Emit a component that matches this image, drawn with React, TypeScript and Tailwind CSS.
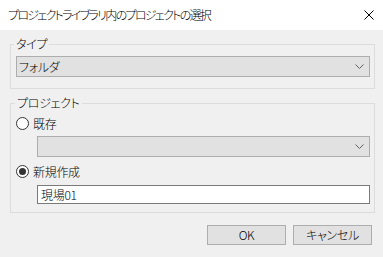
const font = { fontFamily: '"Noto Sans CJK JP", "Noto Sans", sans-serif' };

function Chevron() {
  return (
    <svg width="9" height="5" viewBox="0 0 9 5" className="mr-[5px]">
      <path d="M0.5 0.5 L4.5 4.5 L8.5 0.5" fill="none" stroke="#606060" strokeWidth="1" />
    </svg>
  );
}

function Combo({ value, className }: { value?: string; className: string }) {
  return (
    <div
      className={`flex h-[21px] items-center justify-between border border-[#adadad] bg-[#e1e1e1] pl-[2px] text-[12px] leading-[14px] text-black ${className}`}
    >
      <span>{value}</span>
      <Chevron />
    </div>
  );
}

function Radio({ checked, label }: { checked?: boolean; label: string }) {
  return (
    <div className="ml-[5px] flex h-[13px] items-center gap-[4px]">
      <div className="flex h-[13px] w-[13px] items-center justify-center rounded-full border border-[#333333] bg-white">
        {checked && <div className="h-[7px] w-[7px] rounded-full bg-[#333333]" />}
      </div>
      <span className="text-[12px] leading-[14px] text-black">{label}</span>
    </div>
  );
}

export default function App() {
  return (
    <div
      className="flex h-[257px] w-[383px] flex-col bg-[#f0f0f0] font-light tracking-[-0.3px] [font-feature-settings:'palt']"
      style={font}
    >
      <div className="flex h-[30px] items-center justify-between bg-white pl-[8px] pr-[9px]">
        <span className="text-[12px] leading-[14px] tracking-[-1.7px] text-black">
          プロジェクトライブラリ内のプロジェクトの選択
        </span>
        <svg width="10" height="10" viewBox="0 0 10 10">
          <path d="M0.5 0.5 L9.5 9.5 M9.5 0.5 L0.5 9.5" stroke="#000" strokeWidth="1" />
        </svg>
      </div>

      <div className="flex flex-col pl-[10px]">
        <fieldset className="mt-[7px] w-[365px] border border-[#dcdcdc] pb-[11px]">
          <legend className="ml-[3px] px-[2px] text-[12px] leading-[14px] text-black">タイプ</legend>
          <Combo value="フォルダ" className="ml-[5px] mt-[5px] w-[354px]" />
        </fieldset>

        <fieldset className="mt-[7px] w-[365px] border border-[#dcdcdc] pb-[8px]">
          <legend className="ml-[4px] px-[2px] text-[12px] leading-[14px] text-black">プロジェクト</legend>
          <div className="mt-[7px]">
            <Radio label="既存" />
          </div>
          <Combo className="ml-[26px] mt-[6px] w-[333px]" />
          <div className="mt-[8px]">
            <Radio checked label="新規作成" />
          </div>
          <div className="ml-[26px] mt-[7px] flex h-[19px] w-[333px] items-center border border-[#7a7a7a] bg-white pl-[3px] text-[12px] leading-[14px] text-black">
            現場01
          </div>
        </fieldset>
      </div>

      <div className="mt-[12px] flex justify-end gap-[7px] pr-[11px]">
        <button className="h-[20px] w-[79px] border border-[#adadad] bg-[#e1e1e1] text-[12px] leading-[14px] text-black">
          OK
        </button>
        <button className="h-[20px] w-[79px] border border-[#adadad] bg-[#e1e1e1] text-[12px] leading-[14px] text-black">
          キャンセル
        </button>
      </div>
    </div>
  );
}
